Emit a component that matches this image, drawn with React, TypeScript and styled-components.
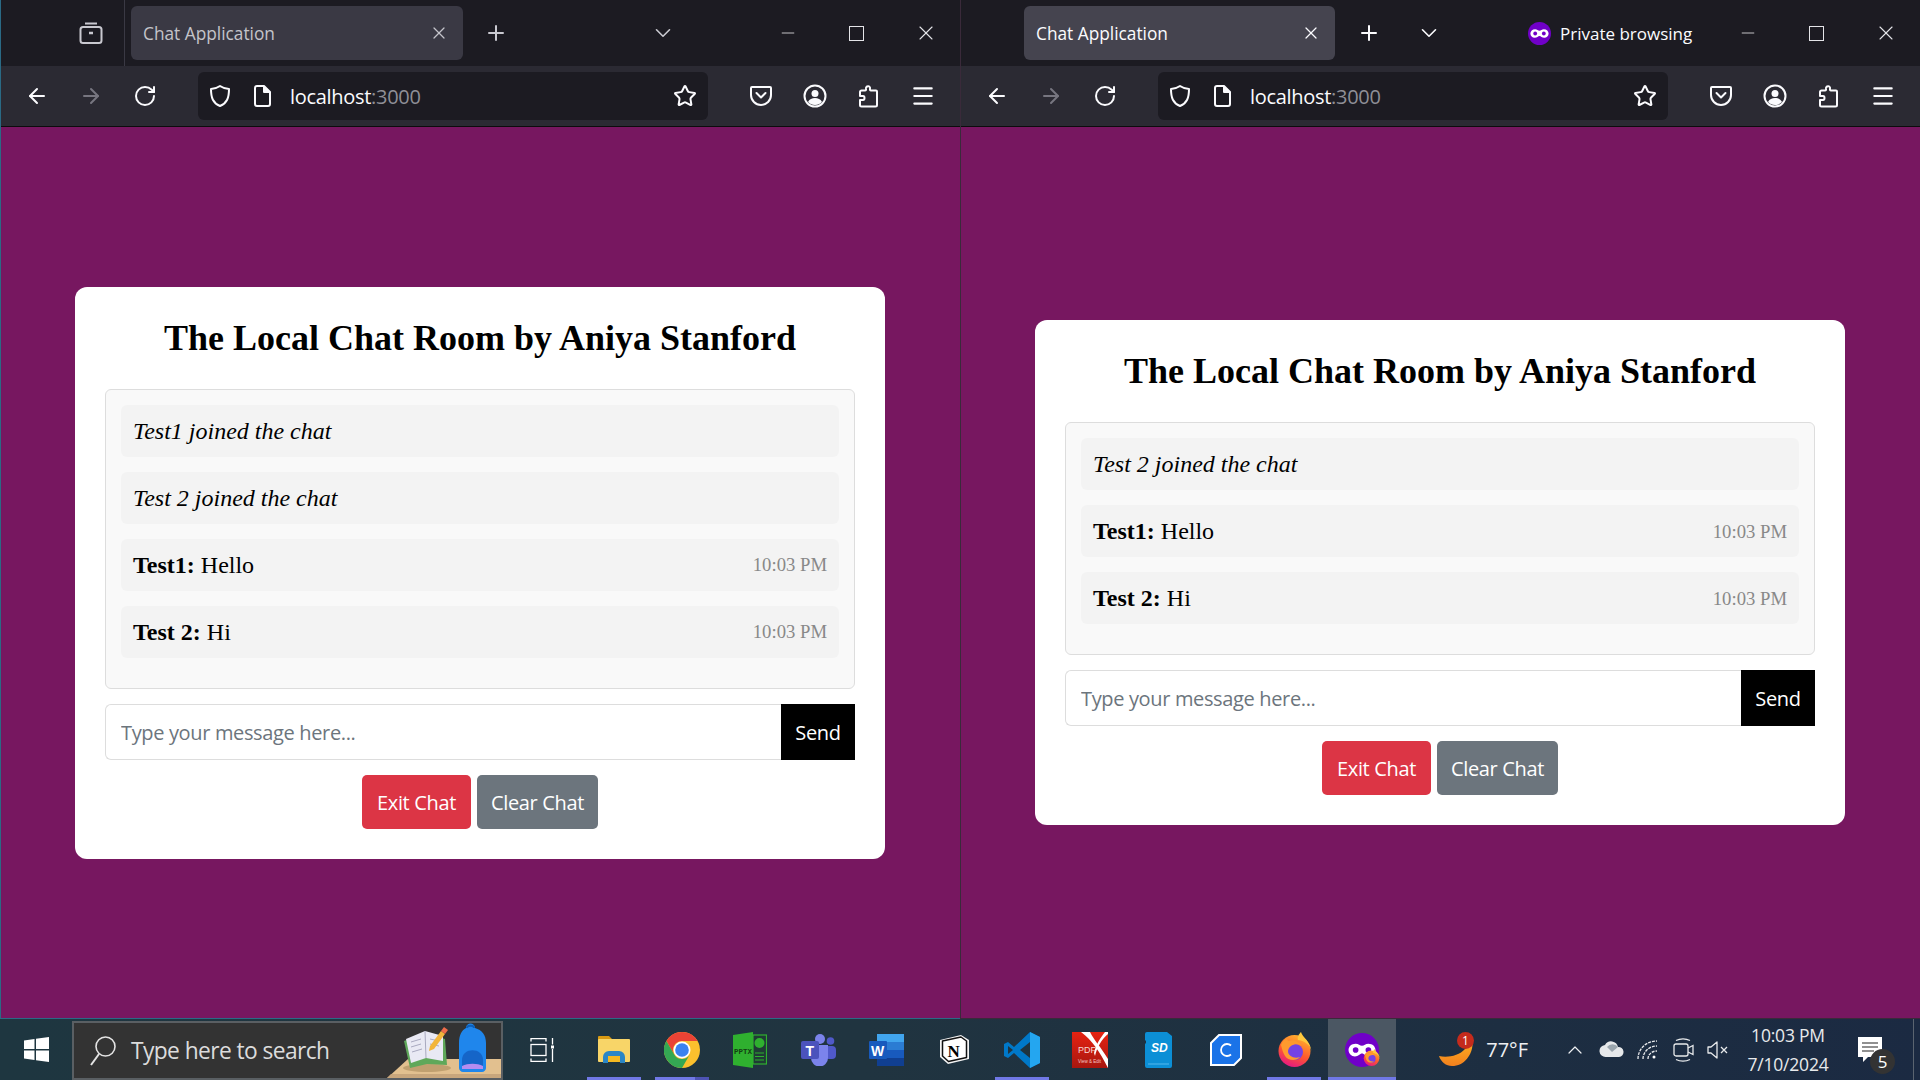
import React from "react"
import styled, { createGlobalStyle } from "styled-components"
import { ArrowLeft, ArrowRight, RotateCw, Star, Menu, X, Plus, ChevronDown, ChevronUp, Minus } from "lucide-react"

const uiFont = `"Open Sans", "Noto Sans", sans-serif`
const serifFont = `"Liberation Serif", serif`

const GlobalStyle = createGlobalStyle`
    html, body {
        margin: 0;
        height: 100%;
        overflow: hidden;
        background: #1c1b22;
    }
    * {
        box-sizing: border-box;
    }
`

const Desktop = styled.div`
    width: 1920px;
    height: 1080px;
    display: flex;
    flex-direction: column;
`
const Windows = styled.div`
    flex: 1;
    min-height: 0;
    display: flex;
`
const BrowserWindow = styled.div<{ $edge: string }>`
    width: 960px;
    display: flex;
    flex-direction: column;
    border-left: 1px solid ${(p) => p.$edge};
    border-bottom: 1px solid ${(p) => p.$edge};
`
const TabBar = styled.div`
    height: 66px;
    flex: none;
    display: flex;
    align-items: center;
    background: #1c1b22;
    color: #fbfbfe;
`
const TrayCell = styled.div`
    width: 124px;
    height: 66px;
    display: flex;
    align-items: center;
    justify-content: flex-end;
    padding-right: 21px;
    border-right: 1px solid #3a3944;
    margin-right: 6px;
    color: #c9c9d0;
`
const Tab = styled.div<{ $private?: boolean }>`
    height: 54px;
    width: ${(p) => (p.$private ? "311px" : "332px")};
    margin-left: ${(p) => (p.$private ? "63px" : "0")};
    display: flex;
    align-items: center;
    justify-content: space-between;
    padding: 0 14px 0 12px;
    border-radius: 6px;
    background: ${(p) => (p.$private ? "#45444f" : "#3a3944")};
    color: ${(p) => (p.$private ? "#fbfbfe" : "#c4c4ca")};
    font: 17.3px ${uiFont};
`
const IconCell = styled.div<{ $width: number; $gap?: number }>`
    width: ${(p) => p.$width}px;
    margin-left: ${(p) => p.$gap ?? 0}px;
    height: 48px;
    flex: none;
    display: flex;
    align-items: center;
    justify-content: center;
`
const PrivateLabel = styled.div`
    display: flex;
    align-items: center;
    gap: 9px;
    margin-left: 79px;
    width: 184px;
    font: 17px ${uiFont};
    color: #fbfbfe;
    white-space: nowrap;
`
const WindowControls = styled.div`
    margin-left: auto;
    display: flex;
    color: #e4e4e8;
`
const ControlButton = styled.div`
    width: 69px;
    height: 66px;
    display: flex;
    align-items: center;
    justify-content: center;
`
const MaximizeBox = styled.div`
    width: 15px;
    height: 15px;
    border: 1px solid currentColor;
`
const Toolbar = styled.div`
    height: 61px;
    flex: none;
    display: flex;
    align-items: center;
    padding: 0 9px 0 9px;
    background: #2b2a33;
    border-bottom: 1px solid #0c0c0d;
    color: #fbfbfe;
`
const NavButton = styled.div<{ $muted?: boolean }>`
    width: 54px;
    height: 48px;
    flex: none;
    display: flex;
    align-items: center;
    justify-content: center;
    color: ${(p) => (p.$muted ? "#777680" : "#fbfbfe")};
`
const UrlBar = styled.div`
    width: 510px;
    height: 48px;
    flex: none;
    margin: 0 26px;
    border-radius: 6px;
    background: #1c1b22;
    display: flex;
    align-items: center;
    padding: 0 11px 0 10px;
`
const UrlIcon = styled.div<{ $width: number }>`
    width: ${(p) => p.$width}px;
    flex: none;
    display: flex;
    justify-content: center;
`
const UrlText = styled.div`
    flex: 1;
    margin-left: -4px;
    font: 20px ${uiFont};
    letter-spacing: -0.3px;
    color: #fbfbfe;
    span {
        color: #8f8f97;
    }
`
const Viewport = styled.div`
    flex: 1;
    min-height: 0;
    display: flex;
    align-items: center;
    justify-content: center;
    padding-right: 1px;
    background: #771760;
`
const ChatCard = styled.div`
    width: 810px;
    padding: 30px;
    border-radius: 12px;
    background: #fff;
`
const Title = styled.h2`
    margin: 0 0 29px;
    text-align: center;
    font: bold 36px/43px ${serifFont};
    color: #000;
`
const MessageArea = styled.div`
    border: 1px solid #ddd;
    border-radius: 6px;
    background: #f9f9f9;
    padding: 15px;
    margin-bottom: 15px;
`
const MessageRow = styled.div`
    height: 52px;
    margin-bottom: 15px;
    padding: 1px 12px 0;
    display: flex;
    align-items: center;
    justify-content: space-between;
    border-radius: 6px;
    background: #f3f3f3;
    font: 24px ${serifFont};
    color: #000;
`
const Notice = styled.em`
    font-style: italic;
`
const TimeStamp = styled.span`
    font-size: 18.7px;
    color: #888;
`
const InputRow = styled.div`
    display: flex;
    height: 56px;
    margin-bottom: 15px;
`
const MessageInput = styled.input`
    flex: 1;
    min-width: 0;
    height: 56px;
    padding: 1px 15px 0;
    border: 1px solid #ddd;
    border-right: 0;
    border-radius: 6px 0 0 6px;
    background: #fff;
    outline: none;
    font: 20px ${uiFont};
    letter-spacing: -0.35px;
    &::placeholder {
        color: #6c757d;
        opacity: 1;
    }
`
const SendButton = styled.button`
    width: 74px;
    border: 0;
    background: #000;
    color: #fff;
    font: 20px ${uiFont};
    letter-spacing: -0.35px;
    padding: 1px 0 0;
`
const ActionRow = styled.div`
    display: flex;
    justify-content: center;
    gap: 6px;
`
const ActionButton = styled.button<{ $tone: string; $width: number }>`
    width: ${(p) => p.$width}px;
    height: 54px;
    border: 0;
    border-radius: 5px;
    padding: 1px 0 0;
    background: ${(p) => p.$tone};
    color: #fff;
    font: 20px ${uiFont};
    letter-spacing: -0.35px;
`
const Taskbar = styled.div`
    height: 61px;
    flex: none;
    display: flex;
    background: linear-gradient(90deg, #1e3640 0%, #203440 45%, #1b2a42 100%);
    color: #fff;
`
const StartButton = styled.div`
    width: 72px;
    display: flex;
    align-items: center;
    justify-content: center;
`
const SearchBox = styled.div`
    position: relative;
    width: 431px;
    margin-top: 2px;
    display: flex;
    align-items: center;
    gap: 15px;
    padding-left: 16px;
    background: #333;
    border: 2px solid #5a5f63;
    color: #dcdcdc;
    font: 22.8px ${uiFont};
    letter-spacing: -0.6px;
    overflow: hidden;
`
const SearchArt = styled.svg`
    position: absolute;
    right: -2px;
    bottom: -2px;
`
const TaskCell = styled.div<{ $width?: number; $active?: boolean }>`
    position: relative;
    width: ${(p) => p.$width ?? 68}px;
    display: flex;
    align-items: center;
    justify-content: center;
    background: ${(p) => (p.$active ? "#4b5763" : "transparent")};
`
const RunningBar = styled.span<{ $inset?: number; $stacked?: boolean }>`
    position: absolute;
    left: ${(p) => p.$inset ?? 7}px;
    right: ${(p) => p.$inset ?? 7}px;
    bottom: 0;
    height: 3px;
    background: ${(p) => (p.$stacked ? "linear-gradient(90deg, #7078e6 74%, #4d53b4 74%)" : "#7078e6")};
`
const SystemTray = styled.div`
    margin-left: auto;
    display: flex;
    align-items: center;
    padding-right: 6px;
    color: #eef0f2;
`
const WeatherTemp = styled.div`
    position: relative;
    display: flex;
    align-items: center;
    gap: 13px;
    font: 20px ${uiFont};
    margin-right: 28px;
`
const Bubble = styled.span<{ $bg: string; $right: number; $top: number; $size: number; $font: number }>`
    position: absolute;
    width: ${(p) => p.$size}px;
    height: ${(p) => p.$size}px;
    right: ${(p) => p.$right}px;
    top: ${(p) => p.$top}px;
    border-radius: 50%;
    background: ${(p) => p.$bg};
    color: #fff;
    display: flex;
    align-items: center;
    justify-content: center;
    font: ${(p) => p.$font}px ${uiFont};
`
const TrayIcon = styled.div<{ $width: number }>`
    width: ${(p) => p.$width}px;
    display: flex;
    justify-content: center;
`
const Clock = styled.div`
    width: 100px;
    margin-left: 4px;
    text-align: center;
    font: 17.5px/29px ${uiFont};
    letter-spacing: -0.2px;
    color: #e8eaec;
`
const NotifyCell = styled.div`
    position: relative;
    width: 64px;
    height: 61px;
    margin-right: 11px;
    display: flex;
    align-items: center;
    justify-content: center;
`
const EdgeLine = styled.div`
    width: 1px;
    height: 61px;
    background: #5a6470;
`

/* toolbar icons */
const Shield = () => (
    <svg width="22" height="24" viewBox="0 0 22 24" fill="none" stroke="currentColor" strokeWidth="2" strokeLinejoin="round">
        <path d="M11 2c3 2 6 3 9 3 0 9-2 14-9 17C4 19 2 14 2 5c3 0 6-1 9-3z" />
    </svg>
)
const PageIcon = () => (
    <svg width="18" height="22" viewBox="0 0 18 22" fill="none" stroke="currentColor" strokeWidth="2" strokeLinejoin="round">
        <path d="M3 1h7l6 6v12a2 2 0 0 1-2 2H3a2 2 0 0 1-2-2V3a2 2 0 0 1 2-2z" />
        <path d="M10 1v6h6" fill="currentColor" />
    </svg>
)
const PocketIcon = () => (
    <svg width="24" height="22" viewBox="0 0 24 22" fill="none" stroke="currentColor" strokeWidth="2" strokeLinejoin="round" strokeLinecap="round">
        <path d="M3 2h18a1 1 0 0 1 1 1v7a10 10 0 0 1-20 0V3a1 1 0 0 1 1-1z" />
        <path d="M7.500 8l4.500 4.500L16.500 8" />
    </svg>
)
const AccountIcon = () => (
    <svg width="24" height="24" viewBox="0 0 24 24" fill="none" stroke="currentColor" strokeWidth="2">
        <circle cx="12" cy="12" r="10.500" />
        <circle cx="12" cy="9.500" r="3.500" fill="currentColor" stroke="none" />
        <path d="M5 18c1.500-3 4-4 7-4s5.500 1 7 4c-2 2-4 3-7 3s-5-1-7-3z" fill="currentColor" stroke="none" />
    </svg>
)
const ExtensionIcon = () => (
    <svg width="24" height="24" viewBox="0 0 24 24" fill="none" stroke="currentColor" strokeWidth="2" strokeLinejoin="round">
        <path d="M10 2.500c2-1 3.500.5 3 2.500-.2.8 0 1.500 1 1.500h5a1 1 0 0 1 1 1V21a1.500 1.500 0 0 1-1.500 1.500H4.500A1.500 1.500 0 0 1 3 21v-5h3c2 0 2-4 0-4H3V8a1.500 1.500 0 0 1 1.500-1.500H8c1 0 1.200-.7 1-1.500-.2-1 0-2 1-2.500z" />
    </svg>
)
const TabTrayIcon = () => (
    <svg width="24" height="24" viewBox="0 0 24 24" fill="none" stroke="currentColor" strokeWidth="2" strokeLinejoin="round">
        <path d="M6 2.500h12" />
        <rect x="1.500" y="6" width="21" height="16" rx="2.500" />
        <path d="M10 12h4" strokeWidth="2.500" />
    </svg>
)
const PrivateMask = ({ size = 24 }: { size?: number }) => (
    <svg width={size} height={size} viewBox="0 0 24 24">
        <circle cx="12" cy="12" r="12" fill="#7000c8" />
        <path d="M7.500 7.500c2 0 3 1.500 4.500 1.500s2.500-1.500 4.500-1.500c3 0 5 2 5 4.500s-2 4.500-4.500 4.500c-2.500 0-3.500-2-5-2s-2.500 2-5 2S2.500 14.500 2.500 12s2-4.500 5-4.500z" fill="#fff" />
        <circle cx="7.500" cy="12" r="2" fill="#7000c8" />
        <circle cx="16.500" cy="12" r="2" fill="#7000c8" />
    </svg>
)

/* taskbar icons */
const SearchGlass = () => (
    <svg width="26" height="30" viewBox="0 0 26 30" fill="none" stroke="#e4e4e4" strokeWidth="1.600">
        <circle cx="15.500" cy="10.500" r="9.500" />
        <path d="M9 18L1 29" strokeWidth="2" />
    </svg>
)
const WindowsLogo = () => (
    <svg width="25" height="25" viewBox="0 0 25 25" fill="#fff">
        <path d="M0 3.500l10.500-1.500v10H0zM12 1.800L25 0v12H12zM0 13.500h10.500v9.500L0 21.500zM12 13.500h13V25l-13-1.800z" />
    </svg>
)
const TaskViewIcon = () => (
    <svg width="24" height="24" viewBox="0 0 24 24" fill="none" stroke="#fff" strokeWidth="1.300">
        <path d="M1 3.500V.7h15v2.800M1 20.500v2.800h15v-2.800" />
        <rect x="1" y="6.500" width="15" height="11" />
        <path d="M22.500 0v6.500M22.500 11v13" />
        <rect x="21" y="7.500" width="3" height="3" fill="#fff" stroke="none" />
    </svg>
)
const ExplorerIcon = () => (
    <svg width="32" height="27" viewBox="0 0 32 27">
        <path d="M1 0h10l4 4H0V1a1 1 0 0 1 1-1z" fill="#d99a12" />
        <rect y="3" width="32" height="23" rx="1" fill="#f8d568" />
        <path d="M5 27v-6a6 6 0 0 1 6-6h10a6 6 0 0 1 6 6v6h-5v-6H10v6z" fill="#2b86c5" />
        <rect x="10" y="20" width="12" height="6" fill="#f5b921" />
    </svg>
)
const ChromeIcon = () => (
    <svg width="36" height="36" viewBox="0 0 36 36">
        <circle cx="18" cy="18" r="18" fill="#fbc02d" />
        <path d="M18 0A18 18 0 0 1 33.590 9H18A9 9 0 0 0 10.200 22.500L2.410 9A18 18 0 0 1 18 0z" fill="#ea4335" />
        <path d="M2.410 9L10.200 22.500A9 9 0 0 0 25.800 22.500L18 36A18 18 0 0 1 2.410 9z" fill="#34a853" />
        <circle cx="18" cy="18" r="8.500" fill="#fff" />
        <circle cx="18" cy="18" r="6.800" fill="#3b82f0" />
    </svg>
)
const PptxIcon = () => (
    <svg width="34" height="36" viewBox="0 0 34 36">
        <path d="M0 3l20-3v36L0 33z" fill="#2fb02f" />
        <rect x="20" y="3" width="13.500" height="29" fill="#1f3b35" stroke="#2fb02f" strokeWidth="1.200" />
        <path d="M0 3h20v3H0z" fill="#2fb02f" />
        <circle cx="26.500" cy="11" r="5" fill="#2fb02f" />
        <path d="M22 21h9M22 24.500h9M22 28h9" stroke="#2fb02f" strokeWidth="1.200" />
        <text x="1" y="22" fontSize="7.500" fontFamily="Liberation Mono, monospace" fontWeight="bold" fill="#134013">PPTX</text>
    </svg>
)
const TeamsIcon = () => (
    <svg width="35" height="32" viewBox="0 0 35 32">
        <circle cx="29.500" cy="7" r="3.800" fill="#5059c9" />
        <rect x="24" y="12" width="11" height="13" rx="4" fill="#5059c9" />
        <circle cx="19" cy="5" r="5" fill="#7b83eb" />
        <path d="M10 11h17v13a8.500 8.500 0 0 1-17 0z" fill="#7b83eb" />
        <rect y="7" width="18" height="18" rx="2" fill="#4b53bc" />
        <text x="4.500" y="21.500" fontSize="14" fontFamily="Liberation Sans, sans-serif" fontWeight="bold" fill="#fff">T</text>
    </svg>
)
const WordIcon = () => (
    <svg width="35" height="32" viewBox="0 0 35 32">
        <rect x="8" width="27" height="8" fill="#41a5ee" />
        <rect x="8" y="8" width="27" height="8" fill="#2b7cd3" />
        <rect x="8" y="16" width="27" height="8" fill="#185abd" />
        <rect x="8" y="24" width="27" height="8" fill="#103f91" />
        <rect y="7" width="18" height="18" rx="1" fill="#185abd" />
        <text x="2" y="21.500" fontSize="14" fontFamily="Liberation Sans, sans-serif" fontWeight="bold" fill="#fff">W</text>
    </svg>
)
const NotionIcon = () => (
    <svg width="29" height="29" viewBox="0 0 29 29">
        <path d="M0 5L21 0l8 5v19l-21 5-8-7z" fill="#f4f4f4" />
        <path d="M2.500 6L21 2l5.500 4v16.500L8.500 26.500l-6-5.500z" fill="#fff" stroke="#111" strokeWidth="1.500" strokeLinejoin="round" />
        <text x="7.500" y="22" fontSize="17" fontFamily="Liberation Serif, serif" fontWeight="bold" fill="#000">N</text>
    </svg>
)
const VsCodeIcon = () => (
    <svg width="36" height="36" viewBox="0 0 36 36">
        <path d="M26 0l10 5v26l-10 5-16-15-6 5-4-2V12l4-2 6 5z" fill="#0078c8" />
        <path d="M26 0l10 5v26l-10 5z" fill="#24a6f0" />
        <path d="M26 10l-10 8 10 8z" fill="#1f3440" />
        <path d="M4 14l5 4-5 4z" fill="#1f3440" />
    </svg>
)
const PdfIcon = () => (
    <svg width="36" height="36" viewBox="0 0 36 36">
        <defs>
            <linearGradient id="pdfred" x1="0" y1="0" x2="0" y2="1">
                <stop offset="0" stopColor="#e62312" />
                <stop offset="1" stopColor="#a8160f" />
            </linearGradient>
        </defs>
        <rect width="36" height="36" fill="url(#pdfred)" />
        <path d="M9 0h9c4 8 10 14 18 27V36C28 20 20 8 9 0z" fill="#fff" />
        <path d="M36 0v2c-6 5-11 13-13 22l-1-3c2-9 7-16 11-21z" fill="#fff" />
        <text x="6" y="21" fontSize="9" fontFamily="Liberation Sans, sans-serif" fill="#f6d8d4">PDF</text>
        <text x="6" y="31" fontSize="4.500" fontFamily="Liberation Sans, sans-serif" fill="#f4c9c4">View &amp; Edit</text>
    </svg>
)
const SdCardIcon = () => (
    <svg width="27" height="36" viewBox="0 0 27 36">
        <path d="M2 0h20l5 4v30a2 2 0 0 1-2 2H2a2 2 0 0 1-2-2V12l1-1V9L0 8V2a2 2 0 0 1 2-2z" fill="#0c8fd6" />
        <text x="6" y="20" fontSize="12" fontFamily="Liberation Sans, sans-serif" fontWeight="bold" fontStyle="italic" fill="#fff">SD</text>
        <path d="M3 32h21" stroke="#55b8ee" />
    </svg>
)
const CIcon = () => (
    <svg width="32" height="32" viewBox="0 0 32 32">
        <path d="M9 1h22v23l-7 7H1V9z" fill="#1a73e8" stroke="#fff" strokeWidth="2" />
        <path d="M21 11.500a6 6 0 1 0 0 9" fill="none" stroke="#fff" strokeWidth="1.800" />
    </svg>
)
const FirefoxIcon = ({ size = 35, gradId = "fxbase" }: { size?: number; gradId?: string }) => (
    <svg width={size} height={size} viewBox="0 0 35 35">
        <defs>
            <linearGradient id={gradId} x1="0.700" y1="0" x2="0.300" y2="1">
                <stop offset="0" stopColor="#ffb52e" />
                <stop offset="0.550" stopColor="#ff5a2c" />
                <stop offset="1" stopColor="#e31587" />
            </linearGradient>
        </defs>
        <circle cx="17.500" cy="19" r="16" fill={`url(#${gradId})`} />
        <path d="M24 0c1 5 10 9 10.500 20C34 14 29 9 21 8c-1-3 1-6 3-8z" fill="#ffc83d" />
        <circle cx="18" cy="20" r="8" fill="#7542e5" />
        <path d="M4 13c2-5 5-6 6-7 0 2 1 3 2 3 4-2 9 0 12 4-6-2-12 0-13 6 0 5 6 8 12 6-3 4-12 4-15-1-2-3-3-7-4-11z" fill="#ff9a2e" />
    </svg>
)
const TaskBadgeWrap = styled.div`
    position: relative;
    width: 34px;
    height: 34px;
`
const TaskBadge = styled.div`
    position: absolute;
    right: -1px;
    bottom: -3px;
`
const PrivateTaskIcon = () => (
    <TaskBadgeWrap>
        <PrivateMask size={34} />
        <TaskBadge>
            <FirefoxIcon size={17} gradId="fxbadge" />
        </TaskBadge>
    </TaskBadgeWrap>
)
const SearchIllustration = () => (
    <SearchArt width="118" height="58" viewBox="0 0 118 58">
        <path d="M0 58l23-21h95v21z" fill="#e2c08f" />
        <path d="M0 58l6-6h112v6z" fill="#c8a67c" />
        <ellipse cx="42" cy="46" rx="24" ry="4" fill="#c0a070" />
        <path d="M19 19l21-8 20 6 2 26-20-1-17 4z" fill="#5fa85a" />
        <path d="M21 17l19-8 18 5 0 25-17-3-15 5z" fill="#e9e9f4" />
        <path d="M40 9l1 27" stroke="#a9a9c0" strokeWidth="1" />
        <path d="M26 20l10-3M26 25l10-3M27 30l10-3M45 17l9 2M45 22l9 2" stroke="#a9a9c0" strokeWidth="1" />
        <path d="M45 24l11-15 4 3-11 15-5 2z" fill="#f2b53b" />
        <path d="M56 9l3-4 4 3-3 4z" fill="#ef6c4a" />
        <path d="M81 6c0-6 9-6 9 0 7 2 11 7 11 15v25c0 2-2 4-4 4H78c-2 0-4-2-4-4V21c0-8 3-13 7-15z" fill="#1f86ec" />
        <path d="M82 6c0-3 7-3 7 0" fill="none" stroke="#0d5fb8" strokeWidth="2" />
        <path d="M77 38c0-13 21-13 21 0v9H77z" fill="#1565c8" />
        <path d="M77 44c6-3 15-3 21 0v3H77z" fill="#b48cf0" />
    </SearchArt>
)
const MoonIcon = () => (
    <svg width="34" height="34" viewBox="0 0 34 34">
        <defs>
            <linearGradient id="moon" x1="0" y1="0" x2="0" y2="1">
                <stop offset="0" stopColor="#ffb51f" />
                <stop offset="1" stopColor="#f2801e" />
            </linearGradient>
        </defs>
        <path d="M33 5C36 18 27 33 13 33 7 33 2 29 0 23c8 2 20 0 26-7 3-4 5-7 7-11z" fill="url(#moon)" />
    </svg>
)
const CloudIcon = () => (
    <svg width="26" height="17" viewBox="0 0 26 17">
        <path d="M7 16a6 6 0 0 1-1-12 7 7 0 0 1 13 2 5 5 0 0 1 1 10z" fill="#e6e8ea" />
        <path d="M8 6a7 7 0 0 1 11 0l-6 5z" fill="#9aa5ad" />
    </svg>
)
const WifiIcon = () => (
    <svg width="22" height="20" viewBox="0 0 22 20" fill="none" stroke="#e8eaec" strokeWidth="1.300">
        <path d="M1 19C1 9 9 1 20 1M6 19c0-7 6-13 14-13M11 19c0-4 3-8 9-8" strokeDasharray="3 1" />
        <circle cx="17" cy="17" r="1.500" fill="#fff" stroke="none" />
    </svg>
)
const CameraIcon = () => (
    <svg width="24" height="24" viewBox="0 0 24 24" fill="none" stroke="#e8eaec" strokeWidth="1.300">
        <rect x="2" y="6" width="14" height="12" rx="2" />
        <path d="M16 10l5-2.500v9L16 14" />
        <path d="M4 2.500c4-2 10-2 14 0M4 21.500c4 2 10 2 14 0" />
    </svg>
)
const SpeakerIcon = () => (
    <svg width="22" height="20" viewBox="0 0 22 20" fill="none" stroke="#e8eaec" strokeWidth="1.300" strokeLinejoin="round">
        <path d="M1 7h3l6-5v16l-6-5H1z" />
        <path d="M14 7l6 6M20 7l-6 6" />
    </svg>
)
const NotifyIcon = () => (
    <svg width="24" height="25" viewBox="0 0 24 25">
        <path d="M0 0h24v20H10l-5 5v-5H0z" fill="#fff" />
        <path d="M4 6h16M4 10h16M4 14h12" stroke="#222" strokeWidth="1.200" />
    </svg>
)

const chromeIcon = { size: 24, strokeWidth: 2 }

function Browser({ isPrivate, messages }: { isPrivate?: boolean; messages: React.ReactNode }) {
    return (
        <BrowserWindow $edge={isPrivate ? "#3a2a3a" : "#2a6a85"}>
            <TabBar>
                {!isPrivate && (
                    <TrayCell>
                        <TabTrayIcon />
                    </TrayCell>
                )}
                <Tab $private={isPrivate}>
                    Chat Application
                    <X size={20} strokeWidth={1.5} />
                </Tab>
                <IconCell $width={44} $gap={isPrivate ? 12 : 11}>
                    <Plus size={24} strokeWidth={2} color={isPrivate ? "#fbfbfe" : "#c9c9d0"} />
                </IconCell>
                <IconCell $width={40} $gap={isPrivate ? 18 : 125}>
                    <ChevronDown size={26} strokeWidth={1.5} color={isPrivate ? "#fbfbfe" : "#c9c9d0"} />
                </IconCell>
                {isPrivate && (
                    <PrivateLabel>
                        <PrivateMask size={23} />
                        Private browsing
                    </PrivateLabel>
                )}
                <WindowControls>
                    <ControlButton>
                        <Minus size={20} strokeWidth={1} />
                    </ControlButton>
                    <ControlButton>
                        <MaximizeBox />
                    </ControlButton>
                    <ControlButton>
                        <X size={24} strokeWidth={1.1} />
                    </ControlButton>
                </WindowControls>
            </TabBar>
            <Toolbar>
                <NavButton>
                    <ArrowLeft {...chromeIcon} />
                </NavButton>
                <NavButton $muted>
                    <ArrowRight {...chromeIcon} />
                </NavButton>
                <NavButton>
                    <RotateCw {...chromeIcon} />
                </NavButton>
                <UrlBar>
                    <UrlIcon $width={24}>
                        <Shield />
                    </UrlIcon>
                    <UrlIcon $width={62}>
                        <PageIcon />
                    </UrlIcon>
                    <UrlText>
                        localhost<span>:3000</span>
                    </UrlText>
                    <Star {...chromeIcon} />
                </UrlBar>
                <NavButton>
                    <PocketIcon />
                </NavButton>
                <NavButton>
                    <AccountIcon />
                </NavButton>
                <NavButton>
                    <ExtensionIcon />
                </NavButton>
                <NavButton>
                    <Menu size={26} strokeWidth={2} />
                </NavButton>
            </Toolbar>
            <Viewport>
                <ChatCard>
                    <Title>The Local Chat Room by Aniya Stanford</Title>
                    <MessageArea>{messages}</MessageArea>
                    <InputRow>
                        <MessageInput placeholder="Type your message here..." />
                        <SendButton>Send</SendButton>
                    </InputRow>
                    <ActionRow>
                        <ActionButton $tone="#dc3545" $width={109}>Exit Chat</ActionButton>
                        <ActionButton $tone="#6c757d" $width={121}>Clear Chat</ActionButton>
                    </ActionRow>
                </ChatCard>
            </Viewport>
        </BrowserWindow>
    )
}

const ChatLine = ({ name, text }: { name: string; text: string }) => (
    <MessageRow>
        <span>
            <b>{name}:</b> {text}
        </span>
        <TimeStamp>10:03 PM</TimeStamp>
    </MessageRow>
)
const JoinLine = ({ name }: { name: string }) => (
    <MessageRow>
        <Notice>{name} joined the chat</Notice>
    </MessageRow>
)

export default function App() {
    return (
        <Desktop>
            <GlobalStyle />
            <Windows>
                <Browser
                    messages={
                        <>
                            <JoinLine name="Test1" />
                            <JoinLine name="Test 2" />
                            <ChatLine name="Test1" text="Hello" />
                            <ChatLine name="Test 2" text="Hi" />
                        </>
                    }
                />
                <Browser
                    isPrivate
                    messages={
                        <>
                            <JoinLine name="Test 2" />
                            <ChatLine name="Test1" text="Hello" />
                            <ChatLine name="Test 2" text="Hi" />
                        </>
                    }
                />
            </Windows>
            <Taskbar>
                <StartButton>
                    <WindowsLogo />
                </StartButton>
                <SearchBox>
                    <SearchGlass />
                    Type here to search
                    <SearchIllustration />
                </SearchBox>
                <TaskCell $width={77}>
                    <TaskViewIcon />
                </TaskCell>
                <TaskCell>
                    <ExplorerIcon />
                    <RunningBar />
                </TaskCell>
                <TaskCell>
                    <ChromeIcon />
                    <RunningBar $stacked />
                </TaskCell>
                <TaskCell>
                    <PptxIcon />
                </TaskCell>
                <TaskCell>
                    <TeamsIcon />
                </TaskCell>
                <TaskCell>
                    <WordIcon />
                </TaskCell>
                <TaskCell>
                    <NotionIcon />
                </TaskCell>
                <TaskCell>
                    <VsCodeIcon />
                    <RunningBar />
                </TaskCell>
                <TaskCell>
                    <PdfIcon />
                </TaskCell>
                <TaskCell>
                    <SdCardIcon />
                </TaskCell>
                <TaskCell>
                    <CIcon />
                </TaskCell>
                <TaskCell>
                    <FirefoxIcon />
                    <RunningBar />
                </TaskCell>
                <TaskCell $active>
                    <PrivateTaskIcon />
                    <RunningBar $inset={0} />
                </TaskCell>
                <SystemTray>
                    <WeatherTemp>
                        <MoonIcon />
                        <Bubble $bg="#c42b1c" $size={17} $right={54} $top={-1} $font={12}>1</Bubble>
                        77°F
                    </WeatherTemp>
                    <TrayIcon $width={37}>
                        <ChevronUp size={24} strokeWidth={1.2} />
                    </TrayIcon>
                    <TrayIcon $width={37}>
                        <CloudIcon />
                    </TrayIcon>
                    <TrayIcon $width={36}>
                        <WifiIcon />
                    </TrayIcon>
                    <TrayIcon $width={36}>
                        <CameraIcon />
                    </TrayIcon>
                    <TrayIcon $width={32}>
                        <SpeakerIcon />
                    </TrayIcon>
                    <Clock>
                        10:03 PM
                        <br />
                        7/10/2024
                    </Clock>
                    <NotifyCell>
                        <NotifyIcon />
                        <Bubble $bg="#333" $size={25} $right={7} $top={30} $font={17}>5</Bubble>
                    </NotifyCell>
                    <EdgeLine />
                </SystemTray>
            </Taskbar>
        </Desktop>
    )
}
